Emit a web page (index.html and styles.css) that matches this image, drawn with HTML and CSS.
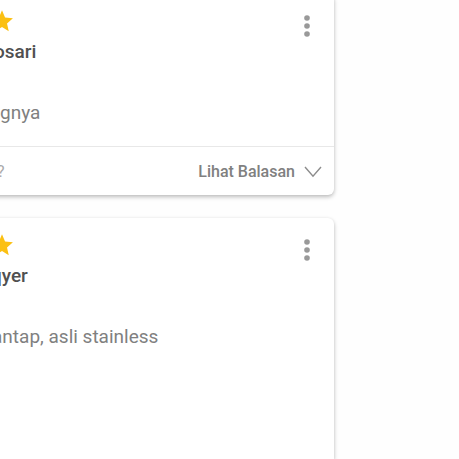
FILE: index.html
```html
<!DOCTYPE html>
<html lang="id">
<head>
<meta charset="utf-8">
<meta name="viewport" content="width=device-width, initial-scale=1">
<title>Ulasan</title>
<link rel="stylesheet" href="styles.css">
</head>
<body>
<main class="reviews">
  <article class="card">
    <div class="card-body">
      <header class="card-head">
        <svg class="star" viewBox="0 0 22 22" aria-hidden="true"><path d="M11 1.2 13.8 7.9 21 8.5 15.6 13.2 17.2 20.4 11 16.6 4.8 20.4 6.4 13.2 1 8.5 8.2 7.9Z"/></svg>
        <button class="more" type="button" aria-label="Menu"><svg viewBox="0 0 6 22"><circle cx="3" cy="3" r="2.8"/><circle cx="3" cy="11" r="2.8"/><circle cx="3" cy="19" r="2.8"/></svg></button>
      </header>
      <h2 class="name">osari</h2>
      <p class="comment">gnya</p>
    </div>
    <footer class="card-foot">
      <span class="question">?</span>
      <button class="replies" type="button">Lihat Balasan
        <svg class="chevron" viewBox="0 0 18 12"><path d="M1 1 9 10.2 17 1"/></svg>
      </button>
    </footer>
  </article>
  <article class="card card-shifted">
    <div class="card-body">
      <header class="card-head">
        <svg class="star" viewBox="0 0 22 22" aria-hidden="true"><path d="M11 1.2 13.8 7.9 21 8.5 15.6 13.2 17.2 20.4 11 16.6 4.8 20.4 6.4 13.2 1 8.5 8.2 7.9Z"/></svg>
        <button class="more" type="button" aria-label="Menu"><svg viewBox="0 0 6 22"><circle cx="3" cy="3" r="2.8"/><circle cx="3" cy="11" r="2.8"/><circle cx="3" cy="19" r="2.8"/></svg></button>
      </header>
      <h2 class="name">qyer</h2>
      <p class="comment">antap, asli stainless</p>
    </div>
  </article>
</main>
</body>
</html>
```
FILE: styles.css
```css
* {
  box-sizing: border-box;
}

body {
  margin: 0;
  overflow: hidden;
  background: #fefefe;
  color: #505050;
  font-family: Roboto, "Liberation Sans", sans-serif;
}

.reviews {
  display: flex;
  flex-direction: column;
  gap: 23px;
  height: 100vh;
  margin: 0 125px 0 -12px;
}

.card {
  flex: none;
  padding-left: 12px;
  background: #fff;
  border-radius: 6px;
  box-shadow: 0 2px 4px rgba(0, 0, 0, 0.26), 0 0 3px rgba(0, 0, 0, 0.04);
}

.card:first-child {
  margin-top: -6px;
}

.card:last-child {
  flex: 1 0 auto;
  border-bottom-right-radius: 0;
}

.card-body {
  padding: 16px 24px 21px 0;
}

.card-head {
  display: flex;
  align-items: center;
  justify-content: space-between;
  height: 22px;
}

.star {
  width: 24px;
  height: 24px;
  margin-left: -10px;
  fill: #fbc013;
}

.more {
  display: flex;
  margin-top: 10px;
  padding: 0;
  border: 0;
  background: none;
}

.more svg {
  width: 6px;
  height: 22px;
  fill: #999;
}

.name {
  margin: 8px 0 0 -6px;
  font-size: 19px;
  font-weight: 500;
  line-height: 24px;
}

.comment {
  margin: 37px 0 0;
  color: #808080;
  font-size: 19px;
  line-height: 24px;
}

.card-shifted .name {
  margin-left: -9px;
}

.card-shifted .comment {
  margin-left: -8px;
}

.card-foot {
  display: flex;
  align-items: center;
  justify-content: space-between;
  height: 49px;
  margin-left: -12px;
  padding: 1px 12px 0;
  border-top: 1px solid #e8e8e8;
}

.question {
  margin-left: -3px;
  color: #aaa;
  font-size: 16px;
}

.replies {
  display: flex;
  align-items: center;
  gap: 9px;
  padding: 0;
  border: 0;
  background: none;
  color: #808080;
  font: 500 16px/24px Roboto, "Liberation Sans", sans-serif;
}

.chevron {
  width: 18px;
  height: 12px;
  fill: none;
  stroke: #8c8c8c;
  stroke-width: 1.4;
}
```
